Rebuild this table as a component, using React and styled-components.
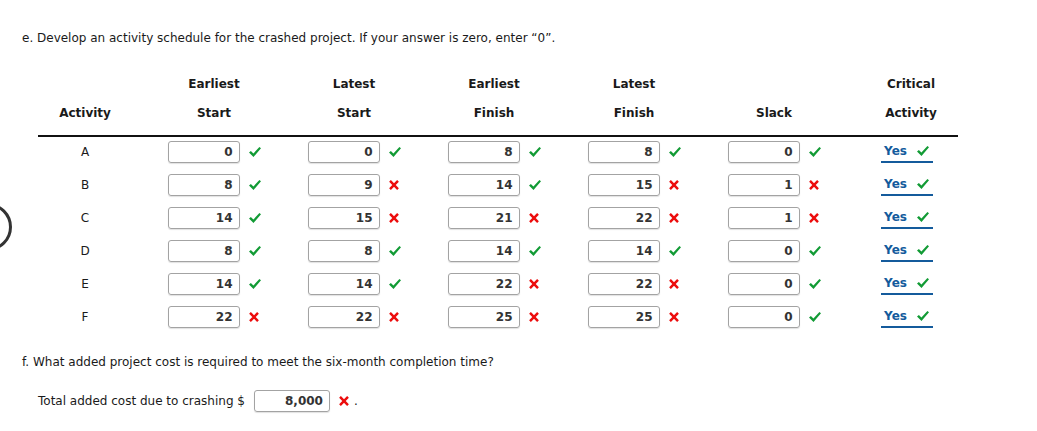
import React from 'react';
import styled, { createGlobalStyle } from 'styled-components';

const GlobalStyle = createGlobalStyle`
    body {
        margin: 0;
        background: #fff;
        color: #1a1a1a;
        font-family: "DejaVu Sans", Verdana, sans-serif;
        font-size: 12px;
    }
`;

const rows = [
    ['A', [0, true], [0, true], [8, true], [8, true], [0, true]],
    ['B', [8, true], [9, false], [14, true], [15, false], [1, false]],
    ['C', [14, true], [15, false], [21, false], [22, false], [1, false]],
    ['D', [8, true], [8, true], [14, true], [14, true], [0, true]],
    ['E', [14, true], [14, true], [22, false], [22, false], [0, true]],
    ['F', [22, false], [22, false], [25, false], [25, false], [0, true]],
];

const heads = [
    ['', 'Activity'],
    ['Earliest', 'Start'],
    ['Latest', 'Start'],
    ['Earliest', 'Finish'],
    ['Latest', 'Finish'],
    ['', 'Slack'],
    ['Critical', 'Activity'],
];

function Check() {
    return (
        <svg width="12" height="10" viewBox="0 0 12 10">
            <path d="M0 5.6 L1.9 4 L4.4 6.4 L10.4 0 L12 1.3 L4.5 10 Z" fill="#129b35" />
        </svg>
    );
}

function Cross() {
    return (
        <svg width="10" height="10" viewBox="0 0 10 10">
            <path d="M1 0.8 L9 9.2 M9 0.8 L1 9.2" stroke="#ec0d0d" strokeWidth="2.4" />
        </svg>
    );
}

function Answer({ value, ok }) {
    return (
        <AnswerWrap>
            <Box>{value}</Box>
            <Mark>{ok ? <Check /> : <Cross />}</Mark>
        </AnswerWrap>
    );
}

function App() {
    return (
        <Page>
            <GlobalStyle />
            <SideRadio />
            <Prompt>e. Develop an activity schedule for the crashed project. If your answer is zero, enter “0”.</Prompt>
            <Table>
                <HeadRow>
                    {heads.map(([top, bottom], i) => (
                        <HeadCell key={i} col={i}>
                            <HeadLine>{top}</HeadLine>
                            <HeadLine>{bottom}</HeadLine>
                        </HeadCell>
                    ))}
                </HeadRow>
                <Body>
                    {rows.map(([name, ...cells]) => (
                        <Row key={name}>
                            <Letter>{name}</Letter>
                            {cells.map(([v, ok], i) => (
                                <Cell key={i}>
                                    <Answer value={v} ok={ok} />
                                </Cell>
                            ))}
                            <CriticalCell>
                                <YesPick>
                                    <span>Yes</span>
                                    <Check />
                                </YesPick>
                            </CriticalCell>
                        </Row>
                    ))}
                </Body>
            </Table>
            <Prompt className="part-f">f. What added project cost is required to meet the six-month completion time?</Prompt>
            <CostRow>
                <span>Total added cost due to crashing $</span>
                <Box wide>8,000</Box>
                <Mark><Cross /></Mark>
                <span>.</span>
            </CostRow>
        </Page>
    );
}

const Page = styled.div`
    position: relative;
    padding: 31px 0 20px 22px;
    min-height: 380px;
    overflow: hidden;

    .part-f {
        margin-top: 27px;
    }
`;

const SideRadio = styled.div`
    position: absolute;
    left: -36px;
    top: 203px;
    width: 42px;
    height: 42px;
    border: 3px solid #333;
    border-radius: 50%;
`;

const Prompt = styled.div`
    line-height: 14px;
    white-space: nowrap;
`;

const Table = styled.div`
    margin: 25px 0 0 16px;
    width: 920px;
`;

const columns = `106px repeat(5, 140px) 114px`;

const HeadRow = styled.div`
    display: grid;
    grid-template-columns: ${columns};
    padding-bottom: 7px;
    border-bottom: 2px solid #111;
`;

const HeadCell = styled.div`
    display: flex;
    flex-direction: column;
    align-items: center;
    font-weight: bold;
    padding-right: ${p => (p.col === 0 ? '12px' : '0')};
    padding-left: ${p => (p.col === 6 ? '20px' : '0')};
`;

const HeadLine = styled.div`
    height: 29px;
    line-height: 29px;
`;

const Body = styled.div`
    display: flex;
    flex-direction: column;
    gap: 11px;
    margin-top: 4px;
`;

const Row = styled.div`
    display: grid;
    grid-template-columns: ${columns};
    height: 22px;
    align-items: center;
`;

const Letter = styled.div`
    text-align: center;
    padding-right: 12px;
`;

const Cell = styled.div`
    display: flex;
    justify-content: center;
`;

const CriticalCell = styled.div`
    display: flex;
    justify-content: center;
    padding-left: 12px;
`;

const AnswerWrap = styled.div`
    display: flex;
    align-items: center;
`;

const Box = styled.div`
    box-sizing: border-box;
    width: ${p => (p.wide ? '76px' : '72px')};
    height: 22px;
    border: 1px solid #a3a3a3;
    border-radius: 3px;
    box-shadow: 0 1px 1px rgba(0, 0, 0, 0.12);
    padding-right: 6px;
    text-align: right;
    line-height: 20px;
    font-weight: bold;
    color: #333;
`;

const Mark = styled.span`
    display: inline-flex;
    width: 12px;
    margin-left: 9px;
`;

const YesPick = styled.div`
    box-sizing: border-box;
    display: flex;
    align-items: center;
    gap: 10px;
    height: 22px;
    padding: 0 4px 0 3px;
    border-bottom: 2px solid #145b9c;
    color: #145b9c;
    font-weight: bold;
`;

const CostRow = styled.div`
    display: flex;
    align-items: center;
    height: 22px;
    margin: 21px 0 0 16px;
    white-space: nowrap;

    & > span:first-child {
        margin-right: 9px;
    }
    & > span:last-child {
        margin-left: 3px;
    }
`;

export default App;
